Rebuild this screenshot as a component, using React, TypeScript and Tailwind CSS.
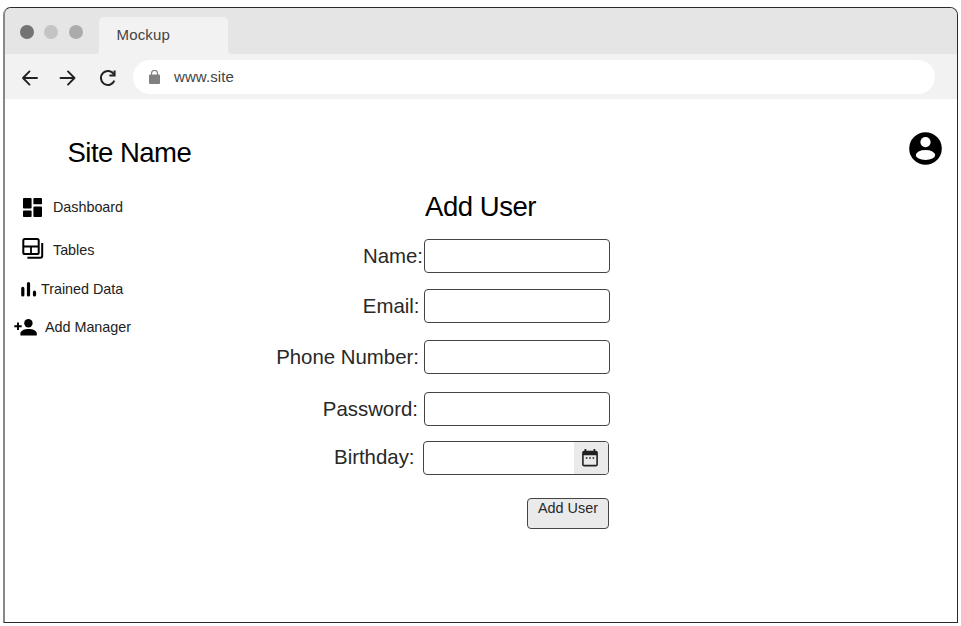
import type { ReactNode } from "react";

function Account() {
  return (
    <svg className="mt-[33px] h-[33px] w-[33px]" viewBox="0 0 33 33">
      <circle cx="16.5" cy="16.5" r="16.3" fill="#000" />
      <circle cx="16.5" cy="10.1" r="5.1" fill="#fff" />
      <ellipse cx="16.5" cy="23" rx="9.7" ry="5.1" fill="#fff" />
    </svg>
  );
}

function Dashboard() {
  return (
    <svg className="h-[19px] w-[19px] shrink-0" viewBox="0 0 19 19" fill="#000">
      <rect width="8.6" height="10.4" rx="0.9" />
      <rect x="10.4" width="8.6" height="6.3" rx="0.9" />
      <rect y="12.6" width="8.6" height="6.4" rx="0.9" />
      <rect x="10.4" y="8.5" width="8.6" height="10.5" rx="0.9" />
    </svg>
  );
}

function AddPerson() {
  return (
    <svg className="h-[17px] w-[23px] shrink-0" viewBox="0 0 23 17" fill="#000">
      <circle cx="14.4" cy="4.3" r="4.2" />
      <path d="M6.4 16.6V14.4C6.4 11.4 11 10 14.6 10S22.8 11.4 22.8 14.4V16.6Z" />
      <path d="M0.3 7.3H7.7M4 3.6V11" stroke="#000" strokeWidth="1.9" />
    </svg>
  );
}

function Tables() {
  return (
    <svg className="h-[22px] w-[22px]" viewBox="0 0 22 22" fill="none" stroke="#000" strokeWidth="2">
      <rect x="1.3" y="2" width="15.4" height="15" rx="1.6" />
      <path d="M1.3 9.5H16.7M9 9.5V17" strokeWidth="1.8" />
      <path d="M20.2 6V19Q20.2 20.8 18.4 20.8H5.4" />
    </svg>
  );
}

function Bars() {
  return (
    <svg className="h-[16px] w-[16px]" viewBox="0 0 16 16" stroke="#000" strokeWidth="3.2" strokeLinecap="round">
      <path d="M1.8 7.3V14M7.5 2.6V14M13.5 11.2V14" />
    </svg>
  );
}

function Calendar() {
  return (
    <svg className="mr-[2px] h-[18px] w-[16px]" viewBox="0 0 16 18">
      <path d="M3.4 0V3M12.4 0V3" stroke="#222" strokeWidth="1.8" />
      <rect x="0.9" y="2.6" width="14.2" height="14" rx="1.2" fill="none" stroke="#222" strokeWidth="1.6" />
      <path d="M1 2.4H15V6.2H1Z" fill="#222" />
      <path d="M3.8 8.9H5.4M7.2 8.9H8.8M10.6 8.9H12.2" stroke="#222" strokeWidth="1.5" />
    </svg>
  );
}

function NavItem({ className, icon, children }: { className: string; icon: ReactNode; children: ReactNode }) {
  return (
    <a className={`flex h-6 items-center text-[14.4px] leading-6 tracking-[-0.04px] text-[#222] ${className}`}>
      {icon}
      {children}
    </a>
  );
}

function Field({ label, row, pad }: { label: string; row: string; pad: string }) {
  return (
    <label className={`flex h-[34px] ${row}`}>
      <span className={`w-[186px] text-right text-[20.4px] leading-[34px] whitespace-nowrap text-[#282828] ${pad}`}>{label}</span>
      <input className="h-[34px] w-[186px] rounded-[4px] border border-[#444] bg-white outline-none" />
    </label>
  );
}

export default function App() {
  return (
    <div className="h-[626px] w-[961px] overflow-hidden bg-white pt-[7px] pl-[3px] font-['Liberation_Sans',Arial,sans-serif]">
      <div className="h-[616px] w-[955px] overflow-hidden rounded-t-[8px] border border-l-2 border-[#2a2a2a] border-l-[#888]">
        <div className="flex h-[46px] bg-[#e5e5e5]">
          <div className="flex h-[47px] w-[91px] items-center gap-[10.2px] pl-[15.3px]">
            <span className="h-[14px] w-[14px] rounded-full bg-[#737373]" />
            <span className="h-[14px] w-[14px] rounded-full bg-[#c4c4c4]" />
            <span className="h-[14px] w-[14px] rounded-full bg-[#ababab]" />
          </div>
          <svg className="mt-[42px] h-1 w-[3px]" viewBox="0 0 3 4"><path d="M3 0V4H0Q3 4 3 0" fill="#f2f2f2" /></svg>
          <div className="mt-[9px] h-[37px] w-[128.5px] rounded-t-[5px] bg-[#f2f2f2] pl-[17.5px] text-[15px] leading-[36px] tracking-[0.15px] text-[#444]">Mockup</div>
          <svg className="mt-[42px] h-1 w-[3px]" viewBox="0 0 3 4"><path d="M0 0V4H3Q0 4 0 0" fill="#f2f2f2" /></svg>
        </div>

        <div className="flex h-[45px] items-center bg-[#f2f2f2] pl-4">
          <svg className="mt-[3px] h-[18px] w-[55px]" viewBox="0 0 55 18" fill="none" stroke="#222" strokeWidth="1.9" strokeLinecap="round" strokeLinejoin="round">
            <path d="M16 9H2M8.5 2.4L2 9L8.5 15.6" />
            <path d="M39.5 9H53.5M47 2.4L53.5 9L47 15.6" />
          </svg>
          <svg className="mt-[3px] ml-[23px] h-[18px] w-[18px]" viewBox="0 0 18 18" fill="none" stroke="#222" strokeWidth="2">
            <path d="M15 5.5A7 7 0 1 0 15.4 11.6" />
            <path d="M15.6 1.4V6.5H10.4" />
          </svg>
          <div className="ml-[16px] flex h-[34px] w-[802px] items-center rounded-full bg-white pl-4">
            <svg className="mt-[1px] h-[14px] w-[11px]" viewBox="0 0 11 14">
              <rect y="4.5" width="11" height="9.5" rx="1" fill="#808080" />
              <path d="M2.5 5V3.5a3 3 0 0 1 6 0V5" fill="none" stroke="#808080" strokeWidth="1.1" />
            </svg>
            <span className="ml-[14px] text-[15px] leading-[34px] tracking-[0.1px] text-[#444]">www.site</span>
          </div>
        </div>

        <header className="flex h-[87px] justify-between pr-[15px] pl-[62.5px]">
          <h1 className="mt-[38px] text-[27.5px] leading-8 tracking-[-0.52px] text-black">Site Name</h1>
          <Account />
        </header>

        <div className="flex">
          <nav className="w-[265px] pt-[9px]">
            <NavItem className="pl-[18px]" icon={<span className="mr-[11px]"><Dashboard /></span>}>Dashboard</NavItem>
            <NavItem className="mt-[19px] pl-[17px]" icon={<span className="mr-[9px] -mt-[4px]"><Tables /></span>}>Tables</NavItem>
            <NavItem className="mt-[15px] pl-[16px]" icon={<span className="mr-[4px]"><Bars /></span>}>Trained Data</NavItem>
            <NavItem className="mt-[14px] pl-[9px]" icon={<span className="mr-[8px]"><AddPerson /></span>}>Add Manager</NavItem>
          </nav>

          <form className="w-[344px]">
            <h2 className="mt-[5px] ml-[155px] text-[27.5px] leading-8 tracking-[-0.45px]">Add User</h2>
            <div className="-ml-[32px] w-[372px]">
              <Field label="Name:" row="mt-[16px]" pad="pr-[1px]" />
              <Field label="Email:" row="mt-[16px]" pad="pr-[4.5px]" />
              <Field label="Phone Number:" row="mt-[17px]" pad="pr-[5px]" />
              <Field label="Password:" row="mt-[18px]" pad="pr-[6px]" />
            </div>
            <div className="mt-[15px] -ml-[33px] flex h-[34px] w-[372px]">
              <span className="w-[186px] pr-[8.5px] text-right text-[20.4px] leading-[32px] text-[#282828]">Birthday:</span>
              <div className="flex w-[186px] justify-end overflow-hidden rounded-[4px] border border-[#444]">
                <span className="flex w-[34px] items-center justify-center bg-[#eaeaea]"><Calendar /></span>
              </div>
            </div>
            <button type="button" className="mt-[23px] ml-[257px] block h-[31px] w-[82px] rounded-[4px] border border-[#444] bg-[#eaeaea] pb-[10px] text-[14.4px] leading-[19px] whitespace-nowrap text-[#282828]">Add User</button>
          </form>
        </div>
      </div>
    </div>
  );
}
